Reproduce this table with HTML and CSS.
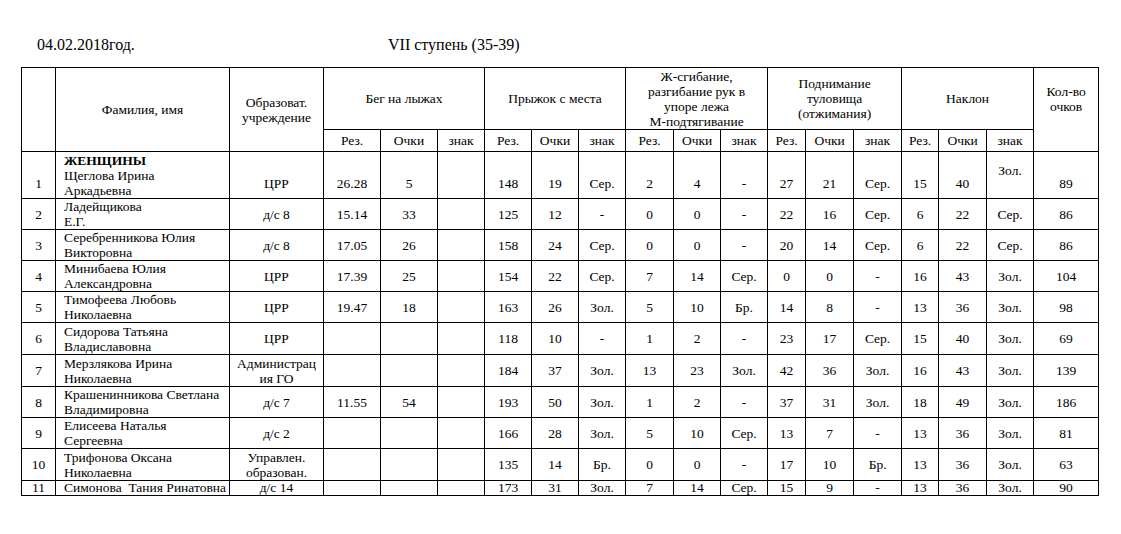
FILE: index.html
```html
<!DOCTYPE html>
<html lang="ru">
<head>
<meta charset="utf-8">
<title>VII ступень (35-39)</title>
<link rel="stylesheet" href="styles.css">
</head>
<body>
<div class="page">
  <div class="heading">
    <span class="date">04.02.2018год.</span>
    <span class="title">VII ступень (35-39)</span>
  </div>
  <table class="results">
    <colgroup>
      <col class="c-num"><col class="c-name"><col class="c-org">
      <col class="c57"><col class="c57"><col class="c47">
      <col class="c47"><col class="c47"><col class="c47">
      <col class="c48"><col class="c47"><col class="c47">
      <col class="c38"><col class="c48"><col class="c48">
      <col class="c37"><col class="c48"><col class="c47">
      <col class="c-total">
    </colgroup>
    <thead>
      <tr class="h1">
        <th rowspan="2"></th>
        <th rowspan="2">Фамилия, имя</th>
        <th rowspan="2">Образоват.<br>учреждение</th>
        <th colspan="3">Бег на лыжах</th>
        <th colspan="3">Прыжок с места</th>
        <th colspan="3">Ж-сгибание,<br>разгибание рук в<br>упоре лежа<br>М-подтягивание</th>
        <th colspan="3">Поднимание<br>туловища<br>(отжимания)</th>
        <th colspan="3">Наклон</th>
        <th rowspan="2" class="total-head">Кол-во<br>очков</th>
      </tr>
      <tr class="h2">
        <th>Рез.</th><th>Очки</th><th>знак</th>
        <th>Рез.</th><th>Очки</th><th>знак</th>
        <th>Рез.</th><th>Очки</th><th>знак</th>
        <th>Рез.</th><th>Очки</th><th>знак</th>
        <th>Рез.</th><th>Очки</th><th>знак</th>
      </tr>
    </thead>
    <tbody>
      <tr class="r-first">
        <td>1</td>
        <td class="name"><b>ЖЕНЩИНЫ</b><br>Щеглова Ирина<br>Аркадьевна</td>
        <td>ЦРР</td>
        <td>26.28</td><td>5</td><td></td>
        <td>148</td><td>19</td><td>Сер.</td>
        <td>2</td><td>4</td><td>-</td>
        <td>27</td><td>21</td><td>Сер.</td>
        <td>15</td><td>40</td><td class="raised">Зол.</td>
        <td>89</td>
      </tr>
      <tr class="r31">
        <td>2</td><td class="name">Ладейщикова<br>Е.Г.</td><td>д/с 8</td>
        <td>15.14</td><td>33</td><td></td>
        <td>125</td><td>12</td><td>-</td>
        <td>0</td><td>0</td><td>-</td>
        <td>22</td><td>16</td><td>Сер.</td>
        <td>6</td><td>22</td><td>Сер.</td>
        <td>86</td>
      </tr>
      <tr class="r31">
        <td>3</td><td class="name">Серебренникова Юлия<br>Викторовна</td><td>д/с 8</td>
        <td>17.05</td><td>26</td><td></td>
        <td>158</td><td>24</td><td>Сер.</td>
        <td>0</td><td>0</td><td>-</td>
        <td>20</td><td>14</td><td>Сер.</td>
        <td>6</td><td>22</td><td>Сер.</td>
        <td>86</td>
      </tr>
      <tr class="r31">
        <td>4</td><td class="name">Минибаева Юлия<br>Александровна</td><td>ЦРР</td>
        <td>17.39</td><td>25</td><td></td>
        <td>154</td><td>22</td><td>Сер.</td>
        <td>7</td><td>14</td><td>Сер.</td>
        <td>0</td><td>0</td><td>-</td>
        <td>16</td><td>43</td><td>Зол.</td>
        <td>104</td>
      </tr>
      <tr class="r31">
        <td>5</td><td class="name">Тимофеева Любовь<br>Николаевна</td><td>ЦРР</td>
        <td>19.47</td><td>18</td><td></td>
        <td>163</td><td>26</td><td>Зол.</td>
        <td>5</td><td>10</td><td>Бр.</td>
        <td>14</td><td>8</td><td>-</td>
        <td>13</td><td>36</td><td>Зол.</td>
        <td>98</td>
      </tr>
      <tr class="r32">
        <td>6</td><td class="name">Сидорова Татьяна<br>Владиславовна</td><td>ЦРР</td>
        <td></td><td></td><td></td>
        <td>118</td><td>10</td><td>-</td>
        <td>1</td><td>2</td><td>-</td>
        <td>23</td><td>17</td><td>Сер.</td>
        <td>15</td><td>40</td><td>Зол.</td>
        <td>69</td>
      </tr>
      <tr class="r32">
        <td>7</td><td class="name">Мерзлякова Ирина<br>Николаевна</td><td>Администрац<br>ия ГО</td>
        <td></td><td></td><td></td>
        <td>184</td><td>37</td><td>Зол.</td>
        <td>13</td><td>23</td><td>Зол.</td>
        <td>42</td><td>36</td><td>Зол.</td>
        <td>16</td><td>43</td><td>Зол.</td>
        <td>139</td>
      </tr>
      <tr class="r31">
        <td>8</td><td class="name">Крашенинникова Светлана<br>Владимировна</td><td>д/с 7</td>
        <td>11.55</td><td>54</td><td></td>
        <td>193</td><td>50</td><td>Зол.</td>
        <td>1</td><td>2</td><td>-</td>
        <td>37</td><td>31</td><td>Зол.</td>
        <td>18</td><td>49</td><td>Зол.</td>
        <td>186</td>
      </tr>
      <tr class="r31">
        <td>9</td><td class="name">Елисеева Наталья<br>Сергеевна</td><td>д/с 2</td>
        <td></td><td></td><td></td>
        <td>166</td><td>28</td><td>Зол.</td>
        <td>5</td><td>10</td><td>Сер.</td>
        <td>13</td><td>7</td><td>-</td>
        <td>13</td><td>36</td><td>Зол.</td>
        <td>81</td>
      </tr>
      <tr class="r32">
        <td>10</td><td class="name">Трифонова Оксана<br>Николаевна</td><td>Управлен.<br>образован.</td>
        <td></td><td></td><td></td>
        <td>135</td><td>14</td><td>Бр.</td>
        <td>0</td><td>0</td><td>-</td>
        <td>17</td><td>10</td><td>Бр.</td>
        <td>13</td><td>36</td><td>Зол.</td>
        <td>63</td>
      </tr>
      <tr class="r-last">
        <td>11</td><td class="name">Симонова&nbsp; Тания Ринатовна</td><td>д/с 14</td>
        <td></td><td></td><td></td>
        <td>173</td><td>31</td><td>Зол.</td>
        <td>7</td><td>14</td><td>Сер.</td>
        <td>15</td><td>9</td><td>-</td>
        <td>13</td><td>36</td><td>Зол.</td>
        <td>90</td>
      </tr>
    </tbody>
  </table>
</div>
</body>
</html>
```
FILE: styles.css
```css
html, body {
  margin: 0;
  padding: 0;
  background: #ffffff;
}

body {
  font-family: "Liberation Serif", "Times New Roman", serif;
  color: #000000;
}

.page {
  padding: 36px 0 0 21px;
}

.heading {
  display: flex;
  align-items: baseline;
  padding-left: 16px;
  font-size: 16px;
  line-height: 18px;
  height: 18px;
  margin-bottom: 13px;
}

.date {
  width: 351px;
  flex: none;
}

.results {
  border-collapse: collapse;
  table-layout: fixed;
  width: 1078px;
  font-family: "Liberation Serif", "Times New Roman", serif;
  font-size: 13.5px;
  line-height: 15px;
}

.c-num { width: 34px; }
.c-name { width: 174px; }
.c-org { width: 94px; }
.c57 { width: 57px; }
.c48 { width: 48px; }
.c47 { width: 47px; }
.c38 { width: 38px; }
.c37 { width: 37px; }
.c-total { width: 65px; }

.results th,
.results td {
  border: 1px solid #000000;
  padding: 0;
  font-family: "Liberation Serif", "Times New Roman", serif;
  text-align: center;
  vertical-align: middle;
  font-weight: normal;
  white-space: nowrap;
  overflow: hidden;
}

.results .h1 { height: 62px; }
.results .h2 { height: 22px; }

.results .total-head {
  padding-bottom: 22px;
}

.results td.name {
  text-align: left;
  padding-left: 8px;
}

.results td.name b {
  font-weight: bold;
}

.r-first { height: 47px; }
.r31 { height: 31px; }
.r32 { height: 32px; }
.r-last { height: 15px; }

.r-first td {
  padding-top: 16px;
}

.r-first td.name {
  padding-top: 0;
}

.r-first td.raised {
  padding-top: 0;
  padding-bottom: 9px;
}

.r-last td {
  line-height: 14px;
}
```
